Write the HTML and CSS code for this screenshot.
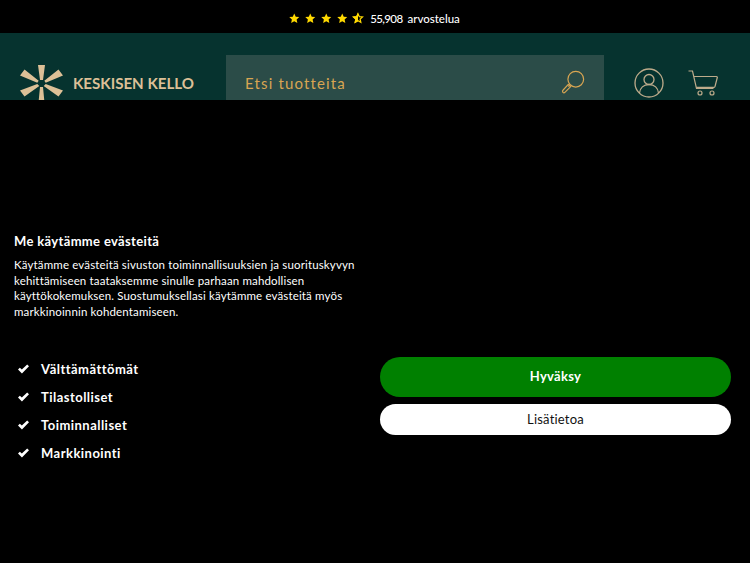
FILE: index.html
```html
<!DOCTYPE html>
<html lang="fi">
<head>
<meta charset="utf-8">
<title>Keskisen Kello</title>
<link rel="stylesheet" href="styles.css">
</head>
<body>
<div class="topbar">
  <div class="stars">
    <svg class="star" viewBox="0 0 24 24"><path d="M12 1l3.400 7.400 8 .9-6 5.400 1.700 8L12 18.700 4.900 22.700l1.700-8-6-5.400 8-.9z"/></svg>
    <svg class="star" viewBox="0 0 24 24"><path d="M12 1l3.400 7.400 8 .9-6 5.400 1.700 8L12 18.700 4.900 22.700l1.700-8-6-5.400 8-.9z"/></svg>
    <svg class="star" viewBox="0 0 24 24"><path d="M12 1l3.400 7.400 8 .9-6 5.400 1.700 8L12 18.700 4.900 22.700l1.700-8-6-5.400 8-.9z"/></svg>
    <svg class="star" viewBox="0 0 24 24"><path d="M12 1l3.400 7.400 8 .9-6 5.400 1.700 8L12 18.700 4.900 22.700l1.700-8-6-5.400 8-.9z"/></svg>
    <svg class="star star-half" viewBox="0 0 24 24"><path class="half-outline" d="M12 3.500l2.700 5.800 6.300.7-4.700 4.300 1.300 6.200L12 17.300 6.400 20.500l1.300-6.200L3 10l6.300-.7z"/><path d="M12 1v17.700L4.900 22.700l1.700-8-6-5.400 8-.9z"/></svg>
  </div>
  <span class="rating"><span class="rating-count">55,908</span> arvostelua</span>
</div>

<header class="header">
  <div class="brand">
    <svg class="logo" viewBox="0 0 43 43">
      <path d="M18 0h7l-2 15h-3zM20 22h3l2 21h-7z"/>
      <path d="M0 10.500L4.500 4.500l14.200 11.200-1.400 2zM43 10.500L38.500 4.500 24.300 15.700l1.400 2z"/>
      <path d="M0 25.500l4.500 6L19.300 21l-2-2zM43 25.500l-4.500 6L23.700 21l2-2z"/>
    </svg>
    <span class="brand-name">KESKISEN KELLO</span>
  </div>
  <div class="search">
    <span class="search-text">Etsi tuotteita</span>
    <svg class="search-icon" viewBox="0 0 26 26">
      <circle cx="16" cy="10" r="8.500"/>
      <path d="M10 16l-2 2M8 15.500l2.500 2.500-6 6c-.8.800-1.800.800-2.400.2s-.6-1.700.2-2.500z"/>
    </svg>
  </div>
  <div class="header-icons">
    <svg class="account-icon" viewBox="0 0 30 30">
      <circle cx="15" cy="15" r="14"/>
      <circle cx="15" cy="11.500" r="5"/>
      <path d="M5.500 25c.5-5 4-8.500 9.500-8.500s9 3.500 9.500 8.500"/>
    </svg>
    <svg class="cart-icon" viewBox="0 0 30 26">
      <path d="M.5 1h4l4 17.500h17"/>
      <path d="M6 6.500h22.500c.6 0 .9.500.8 1l-2.300 9c-.1.500-.5.800-1 .8H8.500"/>
      <circle cx="12" cy="23" r="2"/>
      <circle cx="24" cy="23" r="2"/>
    </svg>
  </div>
</header>

<main class="consent">
  <section class="consent-info">
    <h1 class="consent-title">Me käytämme evästeitä</h1>
    <p class="consent-text">Käytämme evästeitä sivuston toiminnallisuuksien ja suorituskyvyn kehittämiseen taataksemme sinulle parhaan mahdollisen käyttökokemuksen. Suostumuksellasi käytämme evästeitä myös markkinoinnin kohdentamiseen.</p>
  </section>
  <section class="consent-row">
    <ul class="categories">
      <li class="category"><svg class="check" viewBox="0 0 12 10"><path d="M0 5.500l2-2 2.200 2.100L10 0l2 2-7.700 8z"/></svg>Välttämättömät</li>
      <li class="category"><svg class="check" viewBox="0 0 12 10"><path d="M0 5.500l2-2 2.200 2.100L10 0l2 2-7.700 8z"/></svg>Tilastolliset</li>
      <li class="category"><svg class="check" viewBox="0 0 12 10"><path d="M0 5.500l2-2 2.200 2.100L10 0l2 2-7.700 8z"/></svg>Toiminnalliset</li>
      <li class="category"><svg class="check" viewBox="0 0 12 10"><path d="M0 5.500l2-2 2.200 2.100L10 0l2 2-7.700 8z"/></svg>Markkinointi</li>
    </ul>
    <div class="actions">
      <button class="btn btn-accept" type="button">Hyväksy</button>
      <button class="btn btn-more" type="button">Lisätietoa</button>
    </div>
  </section>
</main>
</body>
</html>
```
FILE: styles.css
```css
* { box-sizing: border-box; }
html, body { margin: 0; padding: 0; }
body {
  width: 750px;
  height: 563px;
  overflow: hidden;
  background: #000;
  color: #fff;
  font-family: Lato, "Noto Sans", sans-serif;
}
.topbar {
  height: 33px;
  display: flex;
  align-items: center;
  justify-content: center;
  gap: 6.500px;
  background: #000;
  padding: 3px 1px 0 0;
}
.stars { display: flex; align-items: center; gap: 5.500px; }
.star { width: 10.500px; height: 10.500px; fill: #ffd900; display: block; }
.star-half { width: 12px; height: 12px; margin-left: -1.500px; }
.half-outline { fill: none; stroke: #ffd900; stroke-width: 2.500; }
.rating { font-size: 11.500px; font-weight: 500; color: #fff; white-space: nowrap; }
.rating-count { margin-right: 2px; letter-spacing: -.6px; }
.header {
  height: 67px;
  background: #06332f;
  display: flex;
  align-items: flex-start;
  overflow: hidden;
}
.brand {
  width: 226px;
  height: 67px;
  padding: 32px 0 0 20px;
  display: flex;
  align-items: flex-start;
  gap: 10px;
}
.logo { width: 43px; height: 43px; fill: #dcc097; flex: none; }
.brand-name {
  margin-top: 9px;
  font-size: 15.100px;
  font-weight: 700;
  color: #dcc097;
  white-space: nowrap;
}
.search {
  width: 378px;
  height: 45px;
  margin-top: 22px;
  background: #2b4c48;
  padding: 0 19px;
  display: flex;
  align-items: flex-start;
  justify-content: space-between;
}
.search-text {
  margin-top: 19px;
  font-size: 15px;
  letter-spacing: 1.150px;
  color: #d8a552;
}
.search-icon {
  width: 24px;
  height: 24px;
  margin: 15px 0 0 0;
  fill: none;
  stroke: #d8a552;
  stroke-width: 1.300;
  flex: none;
}
.header-icons {
  display: flex;
  align-items: flex-start;
  padding: 35px 0 0 30px;
  gap: 24px;
}
.account-icon {
  width: 30px;
  height: 30px;
  fill: none;
  stroke: #bdab8b;
  stroke-width: 1.300;
  flex: none;
}
.cart-icon {
  width: 30px;
  height: 26px;
  margin-top: 2px;
  fill: none;
  stroke: #bdab8b;
  stroke-width: 1.200;
  flex: none;
}
.consent {
  padding: 133px 19px 0 14px;
}
.consent-title {
  margin: 0;
  font-size: 13px;
  line-height: 16px;
  font-weight: 700;
  letter-spacing: .35px;
}
.consent-text {
  width: 350px;
  margin: 8px 0 0;
  font-size: 11.500px;
  line-height: 15.500px;
  letter-spacing: .15px;
  color: #fff;
}
.consent-row {
  display: flex;
  justify-content: space-between;
  align-items: flex-start;
  margin-top: 38px;
}
.categories {
  list-style: none;
  margin: 0;
  padding: 4px 0 0 4px;
  display: flex;
  flex-direction: column;
  gap: 12px;
}
.category {
  display: flex;
  align-items: center;
  gap: 12px;
  height: 16px;
  font-size: 13px;
  font-weight: 700;
  letter-spacing: .47px;
}
.check {
  width: 11px;
  height: 10px;
  fill: #fff;
  flex: none;
}
.actions {
  width: 351px;
  display: flex;
  flex-direction: column;
  gap: 7px;
}
.btn {
  display: block;
  width: 100%;
  border: 0;
  border-radius: 20px;
  font-family: inherit;
  padding: 0;
}
.btn-accept {
  height: 40px;
  padding-bottom: 2px;
  background: #008000;
  color: #fff;
  font-size: 13px;
  font-weight: 700;
  letter-spacing: .3px;
}
.btn-more {
  height: 31px;
  padding-bottom: 2px;
  border-radius: 16px;
  background: #fff;
  color: #111;
  font-size: 13px;
  letter-spacing: .2px;
}
```
